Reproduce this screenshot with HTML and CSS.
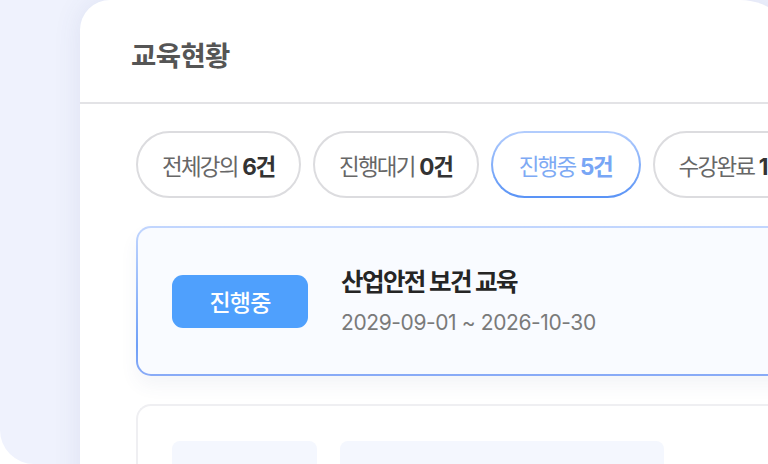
FILE: index.html
```html
<!DOCTYPE html>
<html lang="ko">
<head>
<meta charset="utf-8">
<title>교육현황</title>
<link rel="stylesheet" href="styles.css">
</head>
<body>
<div class="stage">
  <section class="panel">
    <header class="panel-head">
      <h1 class="panel-title">교육현황</h1>
    </header>
    <div class="panel-body">
      <nav class="tabs">
        <button class="tab">전체강의 <b>6건</b></button>
        <button class="tab">진행대기 <b>0건</b></button>
        <button class="tab tab-active">진행중 <b>5건</b></button>
        <button class="tab">수강완료 <b>1건</b></button>
      </nav>
      <article class="course course-active">
        <span class="badge">진행중</span>
        <div class="course-info">
          <h2 class="course-title">산업안전 보건 교육</h2>
          <p class="course-date">2029-09-01 ~ 2026-10-30</p>
        </div>
      </article>
      <article class="course course-skeleton">
        <span class="sk sk-badge"></span>
        <span class="sk sk-line"></span>
      </article>
    </div>
  </section>
</div>
</body>
</html>
```
FILE: styles.css
```css
* { box-sizing: border-box; }
html, body { margin: 0; padding: 0; background: #ffffff; }
body {
  font-family: Inter, "Noto Sans CJK KR", "Noto Sans", sans-serif;
  width: 768px;
  height: 464px;
  overflow: hidden;
}
.stage {
  width: 768px;
  height: 464px;
  background: #eff2fd;
  border-bottom-left-radius: 34px;
  overflow: hidden;
  padding-left: 80px;
}
.panel {
  width: 720px;
  height: 520px;
  background: #ffffff;
  border-radius: 30px 60px 0 0;
  box-shadow: 0 0 28px rgba(70, 80, 150, 0.10);
}
.panel-head {
  height: 104px;
  border-bottom: 2px solid #e3e3e6;
  display: flex;
  align-items: center;
  padding: 6px 0 0 51px;
}
.panel-title {
  margin: 0;
  font-size: 27.5px;
  font-weight: 600;
  color: #555555;
  letter-spacing: -0.6px;
}
.panel-body {
  padding: 27px 0 0 56px;
  display: flex;
  flex-direction: column;
  gap: 28px;
}
.tabs {
  display: flex;
  gap: 12px;
  white-space: nowrap;
}
.tab {
  flex: none;
  height: 67px;
  padding: 0 24px;
  border: 2px solid #dcdcdf;
  border-radius: 34px;
  background: #ffffff;
  font-family: inherit;
  font-size: 22.5px;
  font-weight: 400;
  color: #676767;
  letter-spacing: -1.8px;
}
.tab b { font-weight: 700; color: #333333; letter-spacing: -1.2px; }
.tab-active {
  padding: 0 26px;
  border-color: transparent;
  background:
    linear-gradient(#ffffff, #ffffff) padding-box,
    linear-gradient(180deg, #b3cdfd, #5993f6) border-box;
  color: #7eaaf4;
}
.tab-active b { color: #78a6f5; }
.course {
  width: 660px;
  border-radius: 15px 0 0 15px;
  display: flex;
  align-items: center;
}
.course-active {
  height: 150px;
  padding-left: 34px;
  gap: 33px;
  border: 2px solid transparent;
  border-right: 0;
  background:
    linear-gradient(#f9fbff, #f9fbff) padding-box,
    linear-gradient(180deg, #c2d6fe, #6f9ff7 80%, #8aabf7) border-box;
  box-shadow: 0 10px 18px rgba(60, 80, 140, 0.06);
}
.badge {
  width: 136px;
  height: 53px;
  border-radius: 11px;
  background: #4fa0fd;
  color: #ffffff;
  font-size: 23px;
  font-weight: 500;
  letter-spacing: -0.8px;
  display: flex;
  align-items: center;
  justify-content: center;
}
.course-info { display: flex; flex-direction: column; gap: 12px; margin-top: -4px; }
.course-title {
  margin: 0;
  font-size: 24.5px;
  font-weight: 700;
  color: #252525;
  letter-spacing: -1.6px;
}
.course-date {
  margin: 0;
  font-size: 21px;
  font-weight: 400;
  color: #7a7a7a;
  letter-spacing: -0.4px;
}
.course-skeleton {
  height: 120px;
  border: 2px solid #efeff2;
  border-right: 0;
  background: #ffffff;
  align-items: flex-start;
  padding: 35px 0 0 34px;
  gap: 23px;
}
.sk { display: block; height: 40px; border-radius: 8px; background: #f4f7fe; }
.sk-badge { width: 145px; }
.sk-line { width: 324px; }
```
